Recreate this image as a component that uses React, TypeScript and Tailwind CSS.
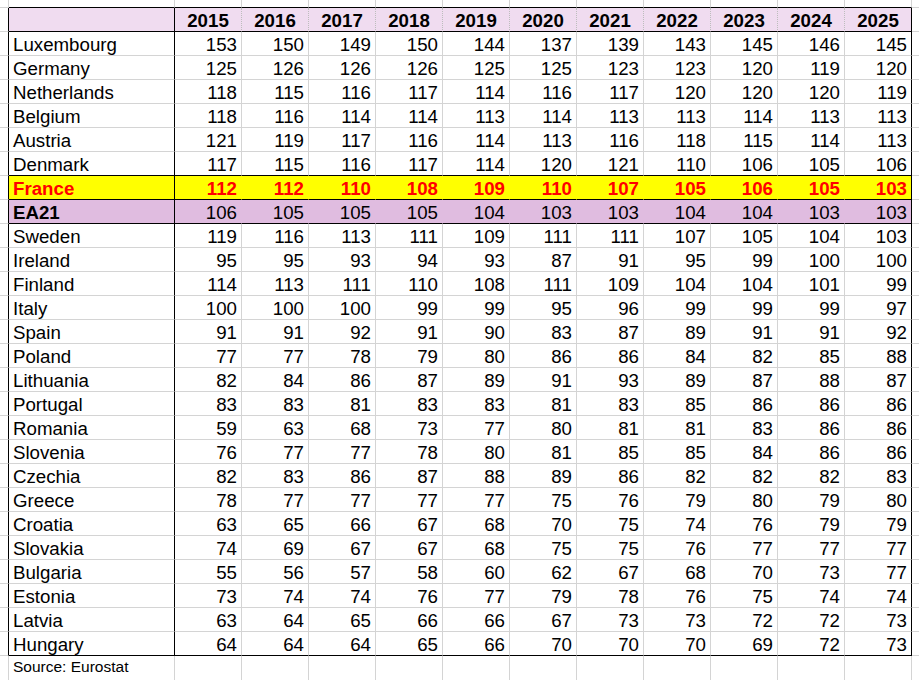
const years = ['2015', '2016', '2017', '2018', '2019', '2020', '2021', '2022', '2023', '2024', '2025'];

const rows: [string, number[]][] = [
  ['Luxembourg', [153, 150, 149, 150, 144, 137, 139, 143, 145, 146, 145]],
  ['Germany', [125, 126, 126, 126, 125, 125, 123, 123, 120, 119, 120]],
  ['Netherlands', [118, 115, 116, 117, 114, 116, 117, 120, 120, 120, 119]],
  ['Belgium', [118, 116, 114, 114, 113, 114, 113, 113, 114, 113, 113]],
  ['Austria', [121, 119, 117, 116, 114, 113, 116, 118, 115, 114, 113]],
  ['Denmark', [117, 115, 116, 117, 114, 120, 121, 110, 106, 105, 106]],
  ['France', [112, 112, 110, 108, 109, 110, 107, 105, 106, 105, 103]],
  ['EA21', [106, 105, 105, 105, 104, 103, 103, 104, 104, 103, 103]],
  ['Sweden', [119, 116, 113, 111, 109, 111, 111, 107, 105, 104, 103]],
  ['Ireland', [95, 95, 93, 94, 93, 87, 91, 95, 99, 100, 100]],
  ['Finland', [114, 113, 111, 110, 108, 111, 109, 104, 104, 101, 99]],
  ['Italy', [100, 100, 100, 99, 99, 95, 96, 99, 99, 99, 97]],
  ['Spain', [91, 91, 92, 91, 90, 83, 87, 89, 91, 91, 92]],
  ['Poland', [77, 77, 78, 79, 80, 86, 86, 84, 82, 85, 88]],
  ['Lithuania', [82, 84, 86, 87, 89, 91, 93, 89, 87, 88, 87]],
  ['Portugal', [83, 83, 81, 83, 83, 81, 83, 85, 86, 86, 86]],
  ['Romania', [59, 63, 68, 73, 77, 80, 81, 81, 83, 86, 86]],
  ['Slovenia', [76, 77, 77, 78, 80, 81, 85, 85, 84, 86, 86]],
  ['Czechia', [82, 83, 86, 87, 88, 89, 86, 82, 82, 82, 83]],
  ['Greece', [78, 77, 77, 77, 77, 75, 76, 79, 80, 79, 80]],
  ['Croatia', [63, 65, 66, 67, 68, 70, 75, 74, 76, 79, 79]],
  ['Slovakia', [74, 69, 67, 67, 68, 75, 75, 76, 77, 77, 77]],
  ['Bulgaria', [55, 56, 57, 58, 60, 62, 67, 68, 70, 73, 77]],
  ['Estonia', [73, 74, 74, 76, 77, 79, 78, 76, 75, 74, 74]],
  ['Latvia', [63, 64, 65, 66, 66, 67, 73, 73, 72, 72, 73]],
  ['Hungary', [64, 64, 64, 65, 66, 70, 70, 70, 69, 72, 73]],
];

// rows whose bottom edge is a black rule
const ruled = ['Denmark', 'France', 'EA21', 'Hungary'];

const cell = 'box-border shrink-0 border-r border-b';

const App = () => {
  return (
    <div className="w-[919px] h-[680px] overflow-hidden bg-white text-black font-['Liberation_Sans',Arial,sans-serif] text-[18.7px]">
      {/* partial row above the table */}
      <div className="flex h-[8px]">
        <div className={`${cell} w-[9px] border-r-[#d4d4d4] border-b-[#d4d4d4]`} />
        <div className={`${cell} w-[166px] border-r-[#d4d4d4] border-b-black`} />
        {years.map((y) => (
          <div key={y} className={`${cell} w-[67px] border-r-[#d4d4d4] border-b-black`} />
        ))}
        <div className={`${cell} w-[8px] border-r-0 border-b-[#d4d4d4]`} />
      </div>

      {/* header */}
      <div className="flex h-[24px] font-bold leading-[19px]">
        <div className={`${cell} w-[9px] border-r-black border-b-[#d4d4d4]`} />
        <div className={`${cell} w-[166px] bg-[#f0dcf0] border-r-black border-b-black`} />
        {years.map((y, i) => (
          <div
            key={y}
            className={`${cell} w-[67px] bg-[#f0dcf0] pt-[3px] text-center border-b-black ${
              i === years.length - 1 ? 'border-r-black' : 'border-r-[#bdbdbd] [border-right-style:dotted]'
            }`}
          >
            {y}
          </div>
        ))}
        <div className={`${cell} w-[8px] border-r-0 border-b-[#d4d4d4]`} />
      </div>

      {/* data rows */}
      {rows.map(([name, values]) => {
        const france = name === 'France';
        const ea = name === 'EA21';
        const bottom = ruled.includes(name) ? 'border-b-black' : 'border-b-[#d4d4d4]';
        const fill = france ? 'bg-[#ffff00] text-[#ff0000] font-bold' : ea ? 'bg-[#e0bce0]' : '';
        const inner = france ? 'border-r-[#ffff00]' : ea ? 'border-r-[#e0bce0]' : 'border-r-[#d4d4d4]';
        return (
          <div key={name} className="flex h-[24px] leading-[19px]">
            <div className={`${cell} w-[9px] border-r-black border-b-[#d4d4d4]`} />
            <div className={`${cell} w-[166px] pl-[4px] pt-[3px] border-r-black ${bottom} ${fill} ${ea ? 'font-bold' : ''}`}>
              {name}
            </div>
            {values.map((v, i) => (
              <div
                key={i}
                className={`${cell} w-[67px] pr-[4px] pt-[3px] text-right ${bottom} ${fill} ${
                  i === values.length - 1 ? 'border-r-black' : inner
                }`}
              >
                {v}
              </div>
            ))}
            <div className={`${cell} w-[8px] border-r-0 border-b-[#d4d4d4]`} />
          </div>
        );
      })}

      {/* source line */}
      <div className="flex h-[25px] leading-[19px]">
        <div className={`${cell} w-[9px] border-r-[#d4d4d4] border-b-[#d4d4d4]`} />
        <div className={`${cell} w-[166px] pl-[4px] pt-[1px] text-[15.5px] border-r-[#d4d4d4] border-b-[#d4d4d4]`}>
          Source: Eurostat
        </div>
        {years.map((y) => (
          <div key={y} className={`${cell} w-[67px] border-r-[#d4d4d4] border-b-[#d4d4d4]`} />
        ))}
        <div className={`${cell} w-[8px] border-r-0 border-b-[#d4d4d4]`} />
      </div>
    </div>
  );
};

export default App;
